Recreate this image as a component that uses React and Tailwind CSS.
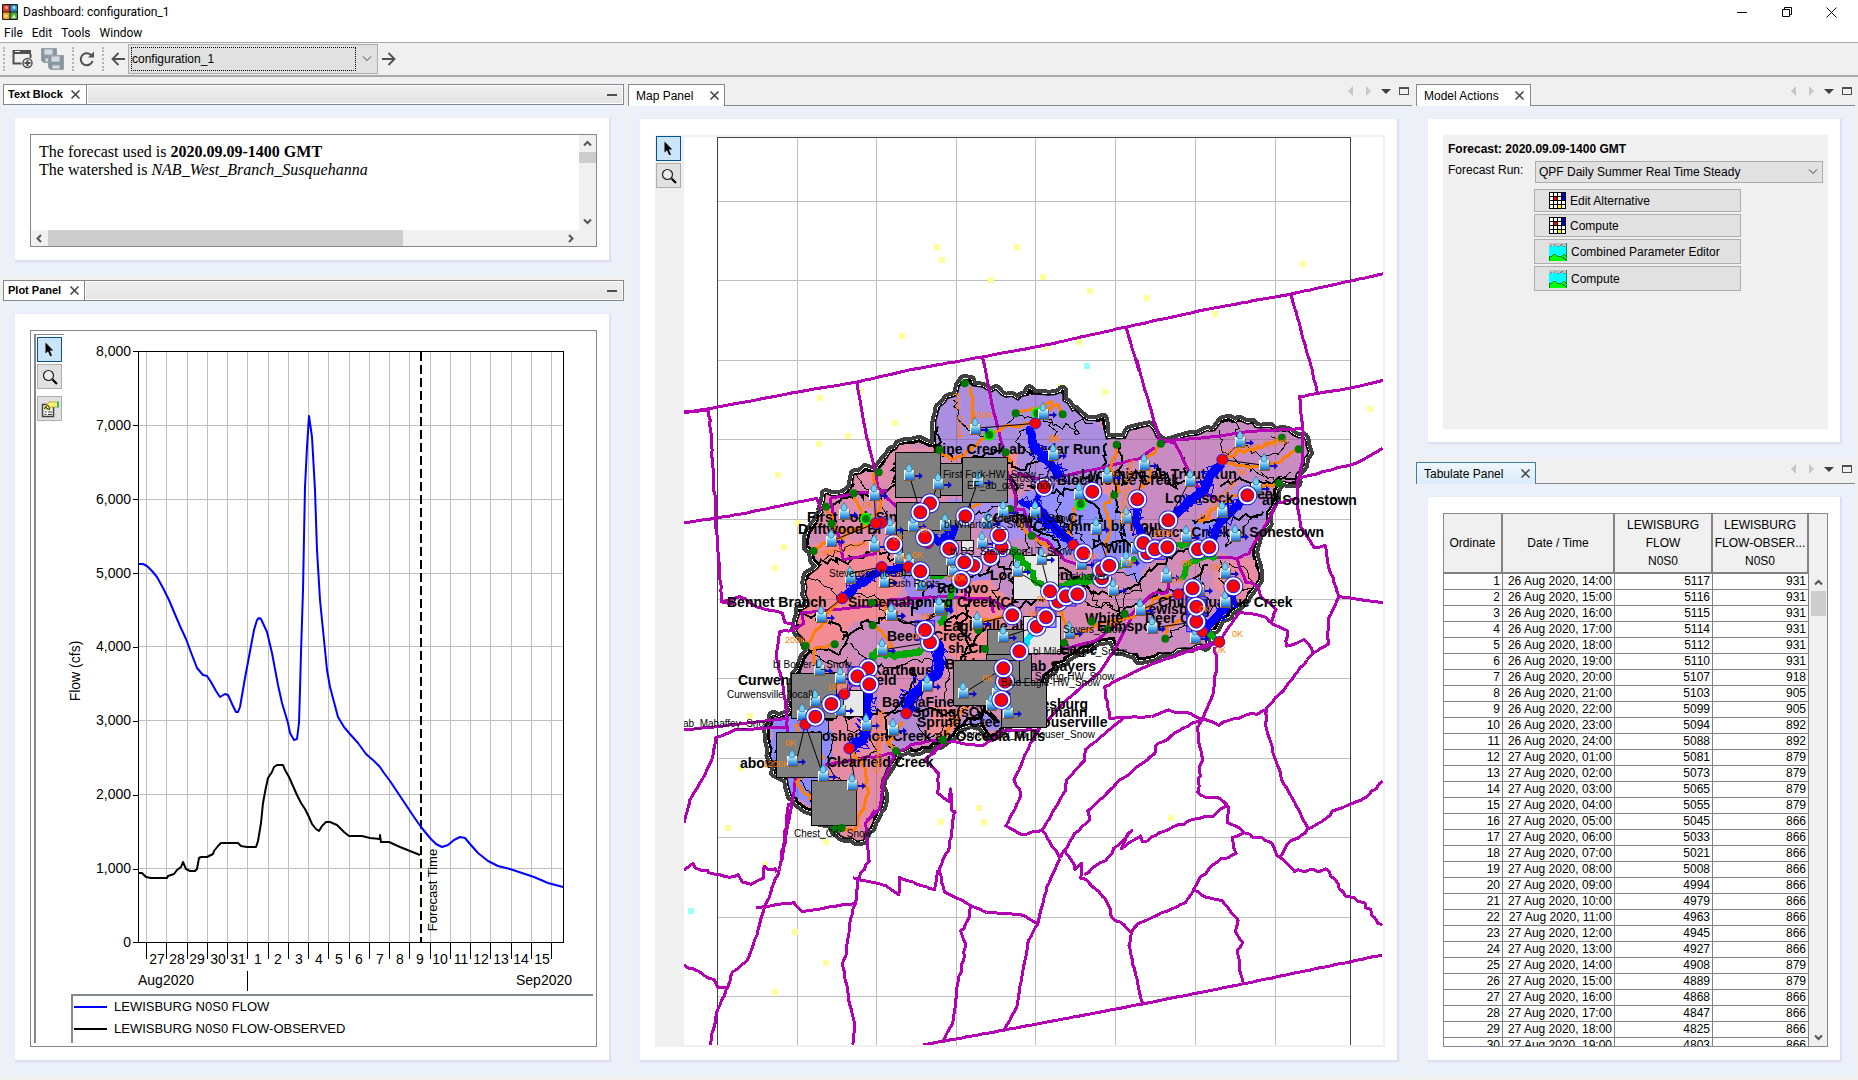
import React from "react";

/* ---------- geometry helpers for the map drawing ---------- */

const sheet = (ox, oy, kx = 3, ky = 3) => (text) =>
  text.trim().split(/\s+/).map((pair) => {
    const [x, y] = pair.split(",").map(Number);
    return [ox + x / kx, oy + y / ky];
  });

const page = sheet(0, 0, 1, 1);
const north = sheet(620, 70, 2.0103, 3);
const nw = sheet(740, 360);
const ne = sheet(1040, 360);
const sw = sheet(730, 600);
const mid = sheet(950, 480);
const south = sheet(670, 780, 2.148, 3);

const noise = (seed) => {
  let s = (seed * 9301 + 49297) % 233280;
  return () => {
    s = (s * 9301 + 49297) % 233280;
    return s / 233280 - 0.5;
  };
};

function rough(points, amp, step, closed = false, seed = 7) {
  const rnd = noise(seed + points.length);
  const pts = closed ? [...points, points[0]] : points;
  const out = [pts[0]];
  for (let i = 1; i < pts.length; i++) {
    const [x0, y0] = pts[i - 1];
    const [x1, y1] = pts[i];
    const n = Math.max(1, Math.round(Math.hypot(x1 - x0, y1 - y0) / step));
    for (let j = 1; j <= n; j++) {
      const t = j / n;
      out.push([x0 + (x1 - x0) * t + rnd() * amp, y0 + (y1 - y0) * t + rnd() * amp]);
    }
  }
  return "M" + out.map(([x, y]) => x.toFixed(1) + " " + y.toFixed(1)).join("L") + (closed ? "Z" : "");
}

const counties = [
  [0.5, page("684,413 740,403 797,392 857,382 909,370 982,357 1046,345 1126,327 1209,309 1291,294 1383,274")],
  [0.5, nw("350,65 365,150 380,230 405,330 415,390 470,440")],
  [0.5, nw("724,-10 730,0 755,130 785,250 800,330 825,400 830,470")],
  [0.5, [...north("1017,772 1043,900"), ...ne("290,0 315,90 360,240 405,250 450,340 480,390 550,430")]],
  [1, [...north("1349,673 1391,900"), ...ne("832,100 780,110 788,205 790,300 775,355 770,415 782,500 825,565 855,555 868,625 898,710 865,775 865,850 820,880 800,900")]],
  [0.5, ne("832,100 930,85 1028,62")],
  [0.5, ne("375,243 530,230 620,215 788,205")],
  [1, ne("775,355 950,310 1028,265")],
  [1, ne("770,415 710,430 680,490 625,580 590,595 500,590")],
  [0.5, ne("898,710 1028,728")],
  [2, ne("590,595 620,665 655,680 665,710 710,750 690,790 740,810 740,860 795,840 820,880")],
  [0.5, [[684, 523], ...nw("0,463 230,415 245,450")]],
  [0.5, nw("270,415 310,600 410,580")],
  [0.5, nw("270,415 345,400 440,390")],
  [0.5, nw("830,340 930,365")],
  [0.5, ne("60,350 200,320 300,295 345,262")],
  [1.5, page("684,411 698,411 709,410 713,470 717,540 722,602 734,604")],
  [1.5, [[722, 602], [740, 597], ...sw("80,20 110,30 155,40 165,65 190,75 190,90 150,95 138,160 150,220 160,270 170,350 175,400 195,540 185,620 155,780")]],
  [1, sw("190,90 220,70 215,40 300,30 400,20 550,10")],
  [1, nw("440,780 450,720 600,710 680,715 750,715 760,760")],
  [1, [[684, 730], ...sw("0,375 175,355")]],
  [0.5, page("684,823 690,800 703,778 712,760 716,738 735,730 788,727")],
  [1.5, south("255,70 240,230 235,270 205,380 180,490 165,545 135,575 125,620 100,700 85,795")],
  [4, south("30,270 50,255 95,285 150,290 170,315 200,290 205,260 230,275")],
  [2, south("30,555 95,600 105,625 125,620")],
  [1, south("185,383 265,368 285,395 395,370")],
  [2, sw("285,495 400,475 490,460 490,470 460,540 450,630 410,660")],
  [1.5, south("440,90 420,130 427,245 405,290 400,360 385,430 380,520 370,545 385,660 398,750 393,795")],
  [1, south("393,293 465,318 492,345 492,292 568,330 575,270")],
  [2, sw("490,460 560,430 640,420 760,440 820,390 930,390")],
  [1.5, [...sw("585,480 640,430"), ...sw("585,480 625,520 625,580 655,605 660,565 665,630 680,640")]],
  [1.5, south("612,90 600,200 578,265 590,335 645,375 680,397 755,403 790,432")],
  [2, south("645,375 645,410 625,455 635,500 620,600 605,730 585,788")],
  [1, south("838,235 810,320 790,432 770,480 755,600 745,680 718,750")],
  [0.5, south("543,795 718,750 1015,672 1230,612 1530,525")],
  [1.5, [...mid("270,745 240,790 220,840"), ...south("738,0 755,45 722,138 755,165 800,150 838,235")]],
  [1, [...mid("520,713 405,810 405,840"), ...south("852,0 850,30 800,150")]],
  [2, [...mid("760,715 700,745 615,800 620,815 590,840"), ...south("968,0 898,95 900,120 870,160 848,210 838,235")]],
  [3.5, south("848,210 870,265 885,255 885,290 930,345 950,405 990,460 985,495")],
  [1, south("985,495 1015,672")],
  [2.5, south("890,285 935,240 990,150 970,208 1010,165 1015,185 1120,120 1165,108 1195,80")],
  [3, [...mid("760,715 740,750 755,840"), ...south("1135,0 1138,50 1185,58 1197,80 1200,125 1232,158 1290,185 1305,230 1340,272 1395,272 1408,265 1450,345 1490,368 1530,440")]],
  [1.5, [...page("1307,660 1286,687 1266,709 1266,729"), ...south("1315,0 1372,148")]],
  [2.5, south("1310,230 1330,190 1372,148 1425,95 1485,60 1530,5")],
  [3, south("1232,158 1210,175 1215,218 1160,255 1125,330")],
  [1, south("1125,330 1108,368 1005,430 990,460")],
  [2, south("1125,330 1160,355 1185,360 1220,420 1215,455 1232,490 1218,515 1230,612")],
  [1.5, mid("810,485 650,535 590,560 462,620 480,715 520,713 605,710")],
  [4, [...mid("605,710 640,690 720,700 760,715 810,735"), [1266, 709]]],
  [2, mid("760,715 790,640 800,560 795,500")],
  [1, mid("550,400 500,500 450,575 350,660 270,745")],
  [1.5, mid("45,300 45,360 120,355 185,400")],
  [2, mid("180,80 220,90 240,160 290,180 340,240 400,265")],
  [1.5, mid("330,510 440,480 545,400 610,340 650,340 660,280")],
  [1.5, ne("410,885 540,840 600,755 680,770 690,790")],
];

const outline = [
  ...nw("672,60 700,72 720,90 770,95 830,120 870,95 960,105"),
  ...ne("65,100 90,150 150,185 190,180 200,240 235,245 270,220 325,198 345,228 375,250 430,232 530,208 545,188 600,182 650,202 720,215 800,240 803,280 780,325 765,362 720,372 700,410 680,465 680,490 645,540 640,580 652,620 655,660 630,690 590,740 560,770 520,800 500,830 500,855 430,858 380,880 300,890 240,870 215,830"),
  ...mid("440,480 350,530 280,590 240,650 170,740 130,770 100,745"),
  ...sw("760,370 700,375 645,425 600,440 500,450 485,490 450,540 460,600 440,650 410,690 405,718 350,718 320,690 250,640 200,608 180,580 170,540 140,520 120,460 118,390 130,352 185,345 190,230 220,180 240,150 222,110 200,80 215,30"),
  ...nw("185,770 205,720 195,660 240,610 205,560 215,520 245,460 260,405 310,402 345,380 345,340 380,335 415,340 430,300 470,270 500,248 540,242 590,270 585,190 612,130 650,110"),
];

const basins = [
  ["#ab8ee0", nw("672,60 600,130 580,200 600,290 700,280 830,330 900,400 1020,420 1120,350 1110,240 1040,150 960,100 830,110")],
  ["#e08cac", nw("590,270 470,250 420,330 340,340 340,400 250,400 230,480 240,520 470,600 600,600 620,400")],
  ["#f38c94", nw("200,560 330,540 470,580 520,620 470,700 440,790 160,790 190,680 240,610")],
  ["#d78cb0", nw("330,380 420,360 480,420 460,520 380,520")],
  ["#f38c94", nw("780,300 830,270 830,340 800,350")],
  ["#a890f0", nw("620,420 830,420 900,560 760,540 700,480 640,470")],
  ["#a088ee", nw("470,610 640,620 760,640 740,700 600,790 520,760")],
  ["#9490ff", ne("60,380 170,380 220,420 260,500 340,590 290,665 200,600 60,580 -60,500 -50,400")],
  ["#e88ca4", ne("180,360 260,380 230,410 190,400")],
  ["#c98cc2", ne("205,240 330,190 540,190 600,180 810,240 800,300 760,360 540,380 440,520 300,530 230,400")],
  ["#b08cdc", ne("545,380 640,360 690,420 680,470 640,540 625,590 530,580 520,480")],
  ["#9490ff", ne("460,480 530,490 530,560 470,560")],
  ["#ea8ca2", ne("540,600 640,600 660,650 640,690 590,740 530,690 515,670")],
  ["#cc8cc0", ne("220,760 340,700 500,640 530,760 500,860 380,885 240,870")],
  ["#d88cb2", ne("0,640 200,690 240,760 60,840 -60,860 -60,680")],
  ["#c48cc6", mid("100,180 250,170 330,240 320,360 180,380 120,280")],
  ["#f38c94", mid("40,300 120,300 200,380 110,540 20,540 -60,460 0,400")],
  ["#cc8cc0", sw("360,60 590,60 600,140 520,180 400,210 340,130")],
  ["#f38c94", sw("220,30 380,40 340,120 230,150 200,90")],
  ["#e58ca4", sw("290,360 410,340 480,340 460,540 410,720 330,720 240,620 300,480")],
  ["#b48cd4", sw("480,330 560,300 620,340 560,430 490,455 465,440")],
  ["#d88cb4", sw("430,200 600,190 660,180 660,300 560,290 470,330")],
  ["#8c8cff", sw("130,350 300,350 310,470 270,560 240,620 180,590 120,480")],
  ["#f38c94", sw("600,320 720,320 640,425 590,390")],
  ["#9c8cf4", sw("700,370 760,320 820,380 780,390 750,370")],
];

const divides = [
  [2, nw("590,200 600,280 680,300 780,280 830,330 900,300 960,280")],
  [1, nw("640,120 660,180 700,230 760,230 830,160 880,180 930,180 950,230")],
  [1, nw("860,200 830,240 880,300 860,340 900,370")],
  [2, nw("470,300 460,380 400,420 350,400 300,430 260,440")],
  [1, nw("345,340 380,390 420,400 440,470 390,540 320,560 250,600")],
  [2, nw("240,610 330,600 420,570 470,600 520,620 560,680 520,760")],
  [1, nw("200,650 260,680 300,720 360,700 420,720 430,780")],
  [2, nw("810,350 840,400 830,450 880,500 950,540 960,600")],
  [1, nw("700,470 760,440 830,470 870,560 800,620 760,700 800,760")],
  [2, nw("600,700 650,650 740,640 760,560")],
  [1, ne("20,180 60,200 90,190 110,230 110,180 150,190")],
  [2, ne("200,250 190,330 230,370 220,430 260,470 250,540 330,590")],
  [2, ne("240,250 240,380 290,330 330,370 360,330 400,380 450,350 430,300")],
  [1, ne("540,210 540,270 580,300 640,330 700,360 760,340")],
  [1, ne("590,190 600,250 660,290 720,280 740,250 700,230")],
  [2, ne("540,380 590,360 660,375 700,365 760,350")],
  [2, ne("460,480 540,480 600,470 680,465")],
  [1, ne("560,440 560,560 620,500 640,470")],
  [2, ne("0,610 70,620 160,700 250,700 320,640 410,580 500,560")],
  [1, ne("150,680 170,740 200,730 230,760 270,700 300,690 290,650 230,640")],
  [2, ne("230,770 340,700 440,690 500,610")],
  [1, ne("480,610 490,700 520,740 480,780 440,800 380,830")],
  [1, ne("540,600 540,660 600,690 640,690 620,630 560,610")],
  [2, ne("-40,380 60,400 120,380 180,470 160,560 250,540")],
  [1, ne("60,400 50,480 100,520 60,590 0,540")],
  [2, mid("100,180 130,230 190,280 190,380 270,360 340,310 400,290")],
  [1, mid("200,130 260,180 300,120 370,130 400,190")],
  [1, mid("410,320 390,350 440,390 470,370 500,390 500,320")],
  [2, mid("50,310 60,400 20,440 60,500 20,560")],
  [2, sw("220,40 300,60 350,110 330,160 230,150")],
  [2, sw("340,120 420,60 560,65 600,60 640,0")],
  [1, sw("360,130 420,190 500,200 560,180 640,180 660,220 640,290")],
  [1, sw("240,150 290,190 350,180 380,210")],
  [2, sw("480,340 520,290 560,240 540,200")],
  [2, sw("190,350 300,350 400,345 470,330 480,450")],
  [1, sw("290,360 310,420 290,500 330,540 350,600")],
  [1, sw("350,340 360,390 400,400 440,460 400,480 360,450")],
  [2, sw("480,335 560,320 620,340 680,340 720,320")],
  [1, sw("560,370 600,420 640,390 690,360")],
  [2, sw("640,60 700,40 760,60 740,130 700,180")],
  [3, sw("690,380 720,355 740,365 770,330 800,360")],
  [1, sw("170,400 140,450 180,520 220,540 240,600")],
];

const greenReach = [
  [6, mid("180,200 230,260 280,320")],
  [7, sw("410,190 440,160 500,165 575,150")],
  [6, nw("655,660 625,720 600,790")],
  [5, nw("570,650 650,640")],
  [5, nw("540,590 560,570")],
  [6, ne("430,660 440,610 480,590 530,590")],
  [5, ne("380,550 470,560")],
  [6, ne("120,670 150,650 230,620 290,590")],
  [4, ne("120,430 115,450")],
  [6, mid("300,330 360,310 430,300 460,260")],
  [6, ne("500,820 540,845")],
];

const blueReach = [
  [9, nw("872,200 880,260 930,310 960,350")],
  [9, ne("0,285 20,300 60,345")],
  [6, nw("910,380 885,430 950,500 1000,550")],
  [10, ne("545,310 510,345 495,390 440,430 400,465")],
  [9, ne("620,410 575,450 535,500 515,545")],
  [8, ne("295,430 285,480 310,540")],
  [7, ne("-60,420 0,465 100,555")],
  [9, ne("580,690 575,720 530,770 490,815")],
  [9, nw("310,715 360,670 420,630 500,625")],
  [9, nw("632,500 632,530 580,545 560,470")],
  [10, sw("360,445 400,412 412,370 412,260")],
  [11, sw("530,340 545,290 590,250 628,215 628,135 605,125")],
  [6, mid("250,90 300,140 370,195")],
  [6, mid("300,430 250,460 210,510 165,560 165,610")],
  [6, sw("226,373 256,350 304,312 343,282 380,230")],
  [6, ne("470,680 470,800")],
  [6, mid("20,120 -10,200")],
];

const orangeReach = [
  nw("690,80 700,110 693,200"),
  nw("750,222 800,200 880,190"),
  nw("750,222 690,270 640,300 600,280"),
  nw("830,160 880,150 930,145 960,130"),
  nw("400,340 410,400 425,440 400,490"),
  nw("340,400 360,450 385,485"),
  nw("260,440 290,510 380,500"),
  nw("220,570 280,540 330,520 400,495"),
  nw("310,715 240,770"),
  nw("395,730 430,730 440,755"),
  nw("720,430 690,450"),
  nw("800,280 815,310"),
  ne("0,140 30,130 65,150"),
  ne("230,250 215,330 240,400 195,430 210,500 195,580"),
  ne("100,440 100,490 85,510 95,550"),
  ne("360,250 320,300 330,350 290,400"),
  ne("545,300 600,275 640,270 725,235"),
  ne("560,310 640,320 720,300 775,270"),
  ne("640,400 680,375 715,370"),
  ne("590,405 540,440 480,490"),
  ne("250,770 180,790 70,840"),
  ne("200,800 300,760 340,720 410,705"),
  ne("375,830 385,800 430,780"),
  mid("180,90 245,170 300,200"),
  mid("350,440 330,390"),
  sw("360,450 410,520 410,600 370,690 320,690"),
  sw("226,373 200,380 280,470 200,540 240,600"),
  sw("490,450 475,430 520,360"),
  sw("640,420 680,350 710,320"),
  sw("430,80 480,120 480,150"),
  sw("230,140 260,90 290,60"),
  sw("315,130 250,150 260,200"),
  sw("760,60 840,50"),
];

const grayBoxes = [
  nw("470,428 692,541"), nw("487,510 622,645"), nw("600,310 668,406"), nw("467,277 602,412"), nw("667,293 802,428"),
  sw("184,220 318,355"), sw("139,397 275,532"), sw("244,541 380,676"), sw("772,87 880,163"), sw("770,163 904,300"),
  sw("671,181 868,316"), sw("815,247 950,382"),
];
const paleBoxes = [nw("665,541 700,572"), nw("820,585 955,717"), sw("880,50 990,160"), sw("340,270 400,350")];
const blueBoxes = [ne("440,710 498,768"), sw("354,200 412,258"), sw("556,62 614,120"), sw("918,22 978,82"), ne("50,680 108,738"), ne("315,540 375,598"), ne("440,755 495,815"), ne("160,600 210,660")];

const dots = [
  ...nw("674,70 827,160 797,277 598,270 416,337 341,400 258,440 275,491 221,573 395,728 810,447 875,527"),
  ...ne("68,163 230,254 362,251 223,405 726,233 776,268 716,370 254,761 155,785 202,808 72,849 376,836"),
  ...sw("227,137 314,133 428,76 498,453 638,420 765,147 745,90 335,684 315,688"),
];
const limeDots = [...nw("748,224 378,476 892,160"), ...ne("122,432")];

const ringed = [
  ...nw("570,430 541,457 676,469 912,381 785,562 778,526 628,566 555,532 700,617 673,607 541,634 663,660 460,553 751,590"),
  ...ne("157,395 292,418 385,481 622,406 322,580 310,549 345,568 382,562 474,568 508,562 130,580 186,655 186,630 208,617 458,685 580,679 469,785 469,740 55,725 30,694 78,709 112,703"),
  ...sw("415,205 382,229 418,253 304,312 256,350 600,127 585,90 847,46 868,154 825,245 820,205 814,300 920,80 948,52"),
];
const plainNodes = [
  ...nw("886,190 425,488 407,490 425,621 307,715 564,549 505,621"),
  ...ne("547,299 100,555 415,703 487,815 538,846"),
  ...sw("343,282 226,373 358,445 529,340"),
];

const gauges = [
  ...nw("508,346 595,373 714,365 705,207 910,163 940,285 403,405 313,462 274,543 451,507 403,558 520,498 616,495 330,654 242,770 476,593 788,456 741,490 884,456 726,549 640,633 432,666 543,675 600,750 830,633 904,598 456,765 508,612 634,600"),
  ...ne("200,352 313,315 117,402 257,475 169,508 449,363 601,247 673,316 649,385 545,456 586,528 439,532 257,605 379,650 220,690 124,612 301,750 337,804 87,820 556,640 556,725 465,835 287,565 477,690"),
  ...sw("484,46 457,150 268,210 331,234 256,304 217,344 331,330 409,376 490,390 592,258 187,484 280,528 367,556 742,70 820,112 700,280 784,315 835,340 628,25 801,280"),
];

const links = [
  nw("508,346 541,457"), nw("595,373 570,430"), nw("714,365 676,469"), nw("705,205 886,190"), nw("940,285 912,381"),
  nw("330,640 425,621"), nw("242,765 307,715"), nw("904,598 928,693"), nw("313,462 407,490"), nw("274,543 407,490"),
  nw("403,405 407,490"), nw("830,633 928,693"), ne("449,363 385,481"), ne("673,316 547,299"), ne("601,247 547,299"), ne("313,315 292,418"),
  ne("169,508 208,617"), ne("337,804 469,785"), ne("301,750 415,703"), ne("0,460 100,555"), sw("226,373 200,480"),
  sw("226,373 280,528"), sw("358,445 375,545"), sw("700,280 820,205"), sw("742,70 847,46"), sw("484,46 585,90"),
  sw("457,150 600,127"), sw("820,112 920,80"), sw("268,210 382,229"), sw("592,258 529,340"), sw("835,340 814,300"),
];

const yellow = [
  ...north("637,531 647,570 745,630 799,531 851,621 945,663 1059,684 1373,582 1197,733 923,817 857,832 567,798"),
  ...south("125,145 335,186 203,256 582,126 674,126 663,84 1076,114 268,456 335,548 225,636"),
  ...nw("240,114 359,93 464,189 324,228 237,252 114,345 174,489 132,561 105,624"),
  ...ne("62,82 194,96 990,147"),
  ...sw("60,348 32,504"),
];
const cyan = [...north("939,888"), ...south("45,393")];

const at = (s, x, y, t) => [s(`${x},${y}`)[0], t];
const boldLabels = [
  at(nw, 578, 283, "Pine Creek ab Cedar Run"),
  at(nw, 200, 485, "First Fork Sinn"),
  at(nw, 175, 522, "Driftwood Br"),
  at(nw, -38, 742, "Bennet Branch"),
  at(nw, 325, 742, "Sinnemahoning Creek(CF"),
  at(nw, 590, 700, "Renovo"),
  at(nw, 760, 488, "Cedar Run Cr"),
  at(ne, 122, 358, "Lycoming ab Trout Run"),
  at(ne, 50, 374, "Blockhouse Creek"),
  at(ne, 375, 430, "Loyalsock"),
  at(ne, 650, 418, "eek"),
  at(ne, 667, 436, "ab Sonestown"),
  at(ne, -20, 514, "Cr Cammal bl Trout"),
  at(ne, 310, 530, "Muncy Creek"),
  at(ne, 580, 530, "bl Sonestown"),
  at(ne, 195, 578, "Williams"),
  at(ne, 355, 742, "Chillisquaque Creek"),
  at(ne, 300, 762, "Lewisburg"),
  at(ne, 135, 788, "White"),
  at(ne, 315, 790, "Deer Cr"),
  at(ne, 170, 812, "Elimsport"),
  at(mid, 120, 300, "Lock Haven"),
  at(mid, 330, 522, "Eagle"),
  at(mid, 240, 572, "ab Sayers"),
  at(mid, 215, 686, "Milesburg"),
  at(mid, 260, 710, "ermann"),
  at(mid, 245, 742, "Houserville"),
  at(sw, 240, 422, "Moshannon Creek ab Osceola Mills"),
  at(sw, 560, 382, "Spring_Creek"),
  at(sw, 455, 322, "BaEFaFinefield"),
  at(sw, 545, 350, "Spring(sC)"),
  at(sw, 23, 254, "Curwensville"),
  at(sw, 30, 503, "above"),
  at(sw, 290, 500, "Clearfield Creek"),
  at(sw, 470, 122, "Beech Creek"),
  at(sw, 640, 92, "Eagleville abv"),
  at(sw, 655, 160, "sh Cr"),
  at(sw, 425, 225, "Karthaus"),
  at(sw, 400, 254, "ffield"),
  at(sw, 645, 208, "Bald"),
];
const smallLabels = [
  at(nw, 608, 355, "First Fork-HW_Snow"),
  at(nw, 680, 388, "EF_ab_gage_Snow"),
  at(nw, 808, 367, "Cross Fork-L_Snow"),
  at(nw, 611, 504, "bl Wharton-L_Snow"),
  at(nw, 735, 485, "Cedar Run-L_Snow"),
  at(nw, 629, 585, "bl DS_Stevenson-LT_Snow"),
  at(nw, 266, 652, "Stevenson (local)"),
  at(nw, 444, 682, "Bush Roots"),
  at(ne, 60, 660, "Lockhaven"),
  at(mid, 340, 460, "Sayers_Snow"),
  at(mid, 250, 525, "bl Milesburg-L_Snow"),
  at(mid, 255, 601, "Spring-HW_Snow"),
  at(mid, 152, 619, "Bald Eagle-HW_Snow"),
  at(mid, 30, 775, "Spring_Crk_ab_Houser_Snow"),
  at(sw, 128, 204, "bl Bower-L_Snow"),
  at(sw, -8, 295, "Curwensville (local)"),
  at(sw, -140, 382, "ab_Mahaffey_Snow"),
  at(sw, 193, 710, "Chest_Crk_Snow"),
];
const orangeLabels = [
  at(nw, 697, 175, "400K"), at(nw, 930, 243, "0K"), at(nw, 370, 445, "0K"), at(nw, 460, 543, "0K"), at(nw, 540, 520, "0K"),
  at(nw, 470, 603, "0K"), at(nw, 515, 595, "0K"), at(nw, 618, 663, "600K"), at(nw, 890, 725, "0K"),
  at(ne, 28, 245, "0K"), at(ne, 590, 345, "0K"), at(ne, 340, 527, "200K"), at(ne, 145, 596, "0K"), at(ne, 254, 618, "0K"),
  at(ne, 425, 617, "0K"), at(ne, 398, 670, "0K"), at(ne, 514, 631, "0K"), at(ne, 478, 755, "0K"), at(ne, 575, 832, "0K"),
  at(ne, 526, 878, "0K"), at(sw, 165, 128, "200K"), at(sw, 290, 271, "1000K"), at(sw, 166, 437, "0K"), at(sw, 100, 502, "1200K"),
  at(sw, 755, 243, "0K"), at(sw, 575, 58, "0K"), at(sw, 545, 118, "0K"), at(sw, 898, 50, "0K"),
];
const turnedLabels = [
  [...at(nw, 650, 165, "Creek"), 90], [...at(nw, 640, 100, "Pine"), 80], [...at(nw, 248, 590, "West Creek"), -14],
  [...at(ne, 250, 490, "Lycoming Creek"), -80], [...at(ne, 550, 285, "Loyalsock Creek"), -10],
  [...at(ne, 485, 490, "Muncy Creek"), -48], [...at(sw, 450, 520, "Clearfield Creek"), -86],
];

function Gauge({ x, y }) {
  return (
    <g transform={`translate(${Math.round(x)} ${Math.round(y)})`}>
      <path d="M-5 5.500h10.500v-10" fill="none" stroke="#8a5a28" strokeWidth="1" />
      <rect x="-5" y="-5" width="10" height="10" fill="#fff3d8" />
      <rect x="-4" y="-4" width="9" height="9" fill="url(#water)" />
      <path d="M0 -12C-1 -9 -3 -8 -3 -6a3 3 0 0 0 6 0C3 -8 1 -9 0 -12Z" fill="#6fd0f4" stroke="#1f6f9f" strokeWidth=".7" />
      <path d="M6 0h4v-2.500l4 3.500-4 3.500v-2.500h-4z" fill="#0a0ac8" />
    </g>
  );
}

function RiverMap() {
  const ring = rough(outline, 5, 6, true);
  const f = "Liberation Sans, Arial, sans-serif";
  return (
    <svg viewBox="684 137 699 908" className="block size-full bg-white" role="img" aria-label="West Branch Susquehanna watershed map">
      <defs>
        <clipPath id="shed"><path d={ring} /></clipPath>
        <linearGradient id="water" x1="0" y1="0" x2="0" y2="1">
          <stop offset="0" stopColor="#d8f4ff" />
          <stop offset="0.400" stopColor="#62c0f4" />
          <stop offset="1" stopColor="#1c62c8" />
        </linearGradient>
      </defs>
      <g stroke="#c0c0c0" shapeRendering="crispEdges">
        {[797, 876, 956, 1035, 1115, 1195, 1275].map((x) => <path key={x} d={`M${x} 137V1045`} />)}
        {[201, 280, 360, 439, 519, 599, 678, 758, 837, 917, 996].map((y) => <path key={y} d={`M717 ${y}H1350`} />)}
      </g>
      <path d="M717.500 1045V137.500H1350.500V1045" fill="none" stroke="#404040" shapeRendering="crispEdges" />
      {yellow.map(([x, y], i) => <rect key={i} x={Math.round(x) - 3} y={Math.round(y) - 3} width="6" height="6" fill="#ffff99" />)}
      {cyan.map(([x, y], i) => <rect key={i} x={Math.round(x) - 3} y={Math.round(y) - 3} width="6" height="6" fill="#99ffff" />)}

      <g fill="none" shapeRendering="crispEdges" strokeLinejoin="round">
        <path d={ring} stroke="#404040" strokeWidth="12" />
        <path d={ring} stroke="#ffffff" strokeWidth="4" />
        <path d={ring} fill="#d18cb8" stroke="#000000" strokeWidth="3" />
      </g>
      <g clipPath="url(#shed)" shapeRendering="crispEdges">
        {basins.map(([c, p], i) => <path key={i} d={rough(p, 5, 6, true, i)} fill={c} />)}
        <g stroke="#000000" strokeOpacity="0.150">
          {[797, 876, 956, 1035, 1115, 1195, 1275].map((x) => <path key={x} d={`M${x} 137V1045`} />)}
          {[439, 519, 599, 678, 758, 837].map((y) => <path key={y} d={`M717 ${y}H1350`} />)}
        </g>
        {divides.map(([w, p], i) => <path key={i} d={rough(p, w > 1 ? 7 : 6, 4, false, i * 3)} fill="none" stroke="#000000" strokeWidth={w} />)}
      </g>
      <g fill="none" shapeRendering="crispEdges" strokeLinejoin="round">
        {counties.map(([a, p], i) => <path key={i} d={rough(p, a, 5, false, i)} stroke="#b400b4" strokeWidth="3" />)}
        {orangeReach.map((p, i) => <path key={i} d={rough(p, 4, 5, false, i)} stroke="#ff8000" strokeWidth="3" />)}
        {greenReach.map(([w, p], i) => <path key={i} d={rough(p, 4, 3, false, i)} stroke="#00aa00" strokeWidth={w} />)}
      </g>

      <g fontFamily={f} fontSize="14" fontWeight="700" fill="#000000">
        {boldLabels.map(([[x, y], t], i) => <text key={i} x={Math.round(x)} y={Math.round(y)}>{t}</text>)}
      </g>
      <g fill="none" shapeRendering="crispEdges" strokeLinejoin="round">
        {blueReach.map(([w, p], i) => <path key={i} d={rough(p, 3, 4, false, i)} stroke="#0000ff" strokeWidth={w - 1} />)}
        {blueReach.map(([w, p], i) => <path key={i} d={rough(p, w * 2, 2, false, i + 5)} stroke="#0000ff" strokeWidth="1" />)}
      </g>
      <g stroke="#000000" shapeRendering="crispEdges">
        {paleBoxes.map(([[x, y], [u, v]], i) => <rect key={i} x={x} y={y} width={u - x} height={v - y} fill="#e8e8e8" />)}
        {grayBoxes.map(([[x, y], [u, v]], i) => <rect key={i} x={x} y={y} width={u - x} height={v - y} fill="#808080" />)}
      </g>
      <path d={rough(mid("180,200 230,260 275,320"), 4, 3)} fill="none" stroke="#00aa00" strokeWidth="6" shapeRendering="crispEdges" />
      <path d={rough(mid("262,445 215,500"), 4, 3)} fill="none" stroke="#00e0ff" strokeWidth="6" shapeRendering="crispEdges" />
      <path d={rough(nw("632,500 625,535 580,548"), 12, 3)} fill="none" stroke="#0000ff" strokeWidth="7" shapeRendering="crispEdges" />
      {links.map(([[x, y], [u, v]], i) => <path key={i} d={`M${x} ${y}L${u} ${v}`} stroke="#000000" strokeWidth="1" />)}
      {blueBoxes.map(([[x, y], [u, v]], i) => <rect key={i} x={x} y={y} width={u - x} height={v - y} fill="#4040ff" fillOpacity="0.350" stroke="#2020ff" />)}
      {limeDots.map(([x, y], i) => <circle key={i} cx={x} cy={y} r="5" fill="#008000" stroke="#00ff00" strokeWidth="2" />)}
      {dots.map(([x, y], i) => <circle key={i} cx={x} cy={y} r="4" fill="#007800" />)}
      {gauges.map(([x, y], i) => <Gauge key={i} x={x} y={y} />)}
      <g fontFamily={f} fontSize="9" fill="#ff8000">
        {turnedLabels.map(([[x, y], t, r], i) => <text key={i} transform={`translate(${x} ${y}) rotate(${r})`}>{t}</text>)}
      </g>
      {plainNodes.map(([x, y], i) => <circle key={i} cx={x} cy={y} r="5.500" fill="#ff0000" stroke="#2020ff" />)}
      {ringed.map(([x, y], i) => (
        <g key={i}>
          <circle cx={x} cy={y} r="9" fill="#2020ff" stroke="#2a20c8" strokeWidth="2" />
          <circle cx={x} cy={y} r="8" fill="#2020ff" stroke="#ffffff" strokeWidth="2" />
          <circle cx={x} cy={y} r="6" fill="#ff0000" />
        </g>
      ))}
      <g fontFamily={f} fontSize="10" fill="#000000">
        {smallLabels.map(([[x, y], t], i) => <text key={i} x={Math.round(x)} y={Math.round(y)}>{t}</text>)}
      </g>
      <g fontFamily={f} fontSize="9" fill="#ff8000">
        {orangeLabels.map(([[x, y], t], i) => <text key={i} x={Math.round(x)} y={Math.round(y)}>{t}</text>)}
      </g>
    </svg>
  );
}

/* ---------- hydrograph ---------- */

const flow =
  "139,564 143,564 147,566 152,571 157,577 163,588 169,600 174,612 180,626 186,639 192,655 197,668 203,675 207,676 211,682 216,691 220,697 225,694 228,695 233,706 236,712 238,712 240,707 245,678 248,662 251,646 254,630 257,620 259,618 261,619 267,632 272,653 278,685 282,703 285,713 288,723 290,733 294,740 297,739 299,723 300,690 301,653 303,590 304,537 305,487 307,447 309,416 312,437 315,490 317,550 320,600 324,640 327,670 330,687 334,702 338,717 344,727 349,733 358,743 366,754 374,761 380,767 384,773 390,781 398,793 406,805 414,817 421,827 430,838 436,844 442,847 448,845 454,840 460,837 465,838 470,844 478,853 488,861 498,866 510,869 522,873 534,877 548,883 563,887";
const observed =
  "139,873 142,873 146,877 151,878 159,878 167,878 168,876 174,874 177,870 181,867 183,862 186,869 190,871 195,871 197,869 199,858 201,857 207,857 213,854 214,851 218,846 221,843 234,843 238,843 241,846 247,847 256,847 258,841 261,823 263,803 266,787 268,778 272,772 274,767 277,765 283,765 285,770 289,777 293,786 297,795 301,803 305,809 309,817 312,824 316,829 319,831 322,826 326,822 330,822 337,825 344,832 349,836 362,836 370,838 380,839 380,835 381,842 389,842 400,847 410,851 420,855";
const days = ["27", "28", "29", "30", "31", "1", "2", "3", "4", "5", "6", "7", "8", "9", "10", "11", "12", "13", "14", "15"];

function Hydrograph() {
  const xs = Array.from({ length: 21 }, (_, i) => Math.round(146.2 + 20.25 * i));
  return (
    <svg viewBox="66 334 527 660" className="block size-full" fontFamily="Liberation Sans, Arial, sans-serif" fontSize="14" role="img" aria-label="Flow hydrograph">
      <g stroke="#c0c0c0" shapeRendering="crispEdges">
        {xs.map((x) => <path key={x} d={`M${x} 352V942`} />)}
        {[1, 2, 3, 4, 5, 6, 7].map((n) => <path key={n} d={`M139 ${Math.round(942 - n * 73.9)}H563`} />)}
      </g>
      <g stroke="#000000" shapeRendering="crispEdges" fill="none">
        <rect x="138.500" y="351.500" width="425" height="591" />
        {xs.map((x) => <path key={x} d={`M${x} 942V959`} />)}
        {[0, 1, 2, 3, 4, 5, 6, 7, 8].map((n) => <path key={n} d={`M133 ${Math.round(942.4 - n * 73.9)}H139`} />)}
        <path d="M247 971V991" />
      </g>
      {[0, 1, 2, 3, 4, 5, 6, 7, 8].map((n) => (
        <text key={n} x="131" y={Math.round(947 - n * 73.9)} textAnchor="end">{n === 0 ? "0" : `${n},000`}</text>
      ))}
      {days.map((d, i) => <text key={d} x={Math.round(156.8 + 20.25 * i)} y="964" textAnchor="middle">{d}</text>)}
      <text x="138" y="985">Aug2020</text>
      <text x="516" y="985">Sep2020</text>
      <text transform="translate(80 671) rotate(-90)" textAnchor="middle">Flow (cfs)</text>
      <text transform="translate(437 890) rotate(-90)" textAnchor="middle" fontSize="13">Forecast Time</text>
      <g fill="none" strokeWidth="2" strokeLinejoin="round">
        <path d="M421 352V942" stroke="#000000" strokeDasharray="9 4" shapeRendering="crispEdges" />
        <polyline points={flow} stroke="#0000ff" />
        <polyline points={observed} stroke="#000000" />
      </g>
    </svg>
  );
}

/* ---------- small icons ---------- */

const CloseX = ({ label }) => (
  <button type="button" aria-label={label} className="flex size-3 items-center justify-center">
    <svg width="9" height="9" viewBox="0 0 9 9"><path d="M0.500 0.500l8 8M8.500 0.500l-8 8" stroke="#404040" strokeWidth="1.500" /></svg>
  </button>
);

const Chevron = ({ dir, size = 9 }) => (
  <svg width={size} height={size} viewBox="0 0 9 9" fill="none" stroke="#555555" strokeWidth="2">
    {dir === "up" && <path d="M1 6.500l3.500-3.500 3.500 3.500" />}
    {dir === "down" && <path d="M1 2.500l3.500 3.500 3.500-3.500" />}
    {dir === "left" && <path d="M6 1l-3.500 3.500 3.500 3.500" />}
    {dir === "right" && <path d="M3 1l3.500 3.500-3.500 3.500" />}
  </svg>
);

const ThinChevron = () => (
  <svg width="10" height="6" viewBox="0 0 10 6" fill="none" stroke="#404040" className="pointer-events-none"><path d="M1 0.500l4 4 4-4" /></svg>
);

function PointerTools() {
  return (
    <>
      <button type="button" aria-label="Select" className="flex h-[25px] w-[25px] items-center justify-center border border-[#005499] bg-[#cce4f7]">
        <svg width="9" height="15" viewBox="0 0 9 15"><path d="M0.500 0.500v11l2.500-2.200 2.200 5 1.800-0.800-2.200-4.900h3.500z" fill="#000000" /></svg>
      </button>
      <button type="button" aria-label="Zoom" className="mt-0.5 flex h-[25px] w-[25px] items-center justify-center border border-[#adadad] bg-[#e1e1e1]">
        <svg width="16" height="16" viewBox="0 0 16 16"><circle cx="6.500" cy="6.500" r="5" fill="#ececec" stroke="#202020" strokeWidth="1.200" /><path d="M10.500 10.500l4.500 4.500" stroke="#000000" strokeWidth="2.200" /></svg>
      </button>
    </>
  );
}

const GridIcon = () => (
  <svg width="17" height="17" viewBox="0 0 17 17" shapeRendering="crispEdges">
    <rect width="17" height="17" fill="#000000" />
    {[0, 1, 2, 3].map((r) => [0, 1, 2, 3].map((c) => (
      <rect key={`${r}${c}`} x={1 + c * 4} y={1 + r * 4} width="3" height="3"
        fill={c === 3 && r < 2 ? "#0000e0" : c === 1 && r === 1 ? "#ff0000" : c === 2 && r === 3 ? "#ffff00" : "#ffffff"} />
    )))}
  </svg>
);

const RainIcon = () => (
  <svg width="18" height="18" viewBox="0 0 18 18" shapeRendering="crispEdges">
    <rect width="18" height="18" fill="#00ffff" />
    <rect width="18" height="3" fill="#c0c0c0" />
    <path d="M1 4l2-2M5 3l2-2M8 4l2-1M11 3l3-2M14 4l2-1" stroke="#708090" />
    <path d="M0 18v-4l3-1 2-2 2 1 2 2 4-1 2-2 3 3v4z" fill="#00ff00" stroke="#108020" />
    <path d="M17.500 0v18M12 13l5 4" stroke="#108060" />
  </svg>
);

/* ---------- panels ---------- */

function Card({ children }) {
  return (
    <div className="flex min-h-0 flex-1 bg-[#ecf0f9] pt-[13px] pr-[15px] pb-4 pl-3">
      <div className="flex min-w-0 flex-1 bg-white pt-4 pr-3 pb-[13px] pl-[15px] shadow-[1px_1px_1px_1px_#dedff2]">{children}</div>
    </div>
  );
}

function SlidePanel({ title, className, children }) {
  return (
    <section className={`flex flex-col ${className}`}>
      <header className="flex h-[21px] shrink-0 items-stretch border border-[#828790] bg-white">
        <div className="flex items-center gap-[7px] border-r border-[#828790] px-1 text-[11px] font-bold">
          <h2>{title}</h2>
          <CloseX label={`Close ${title}`} />
        </div>
        <div className="m-px flex flex-1 items-center justify-end bg-linear-to-b from-[#efefef] to-[#e4e4e4] pr-1">
          <button type="button" aria-label={`Minimize ${title}`} className="flex h-4 w-3 items-center justify-center"><span className="h-0.5 w-2.5 bg-[#505050]" /></button>
        </div>
      </header>
      <Card>{children}</Card>
    </section>
  );
}

function TabPanel({ title, active, className, children }) {
  return (
    <section className={`flex flex-col ${className}`}>
      <header className="flex h-[22px] shrink-0 items-stretch">
        <div className={active
          ? "flex items-center gap-4 border border-b-0 border-[#3c7fb1] bg-linear-to-b from-[#f0f7fd] to-[#d9ebf9] pr-1 pl-[7px]"
          : "flex items-center gap-[15px] border border-b-0 border-[#828790] bg-white pr-1 pl-[7px]"}>
          <h2>{title}</h2>
          <CloseX label={`Close ${title}`} />
        </div>
        <div className="flex flex-1 items-start justify-end gap-1.5 border-b border-[#828790] pt-px pr-0.5">
          <button type="button" aria-label="Previous tab" className="flex size-3 items-center justify-center"><svg width="5" height="10" viewBox="0 0 5 10"><path d="M5 0v10l-5-5z" fill="#c6c6c6" /></svg></button>
          <button type="button" aria-label="Next tab" className="flex size-3 items-center justify-center"><svg width="5" height="10" viewBox="0 0 5 10"><path d="M0 0v10l5-5z" fill="#c6c6c6" /></svg></button>
          <button type="button" aria-label="Tab list" className="flex size-3 items-center justify-center"><svg width="10" height="5" viewBox="0 0 10 5"><path d="M0 0h10l-5 5z" fill="#404040" /></svg></button>
          <button type="button" aria-label="Maximize" className="flex size-3 items-center justify-center"><span className="h-2 w-2.5 border border-t-2 border-[#505050]" /></button>
        </div>
      </header>
      <Card>{children}</Card>
    </section>
  );
}

const flows = [5117, 5116, 5115, 5114, 5112, 5110, 5107, 5103, 5099, 5094, 5088, 5081, 5073, 5065, 5055, 5045, 5033, 5021, 5008, 4994, 4979, 4963, 4945, 4927, 4908, 4889, 4868, 4847, 4825, 4803];
const seen = [931, 931, 931, 931, 931, 931, 918, 905, 905, 892, 892, 879, 879, 879, 879, 866, 866, 866, 866, 866, 866, 866, 866, 866, 879, 879, 866, 866, 866, 866];
const rows = flows.map((v, i) => {
  const hour = 14 + i;
  const day = hour > 24 ? 27 : 26;
  const hh = String(hour > 24 ? hour - 24 : hour).padStart(2, "0");
  return [i + 1, `${day} Aug 2020, ${hh}:00`, v, seen[i]];
});

const heads = [["Ordinate"], ["Date / Time"], ["LEWISBURG", "FLOW", "N0S0"], ["LEWISBURG", "FLOW-OBSER...", "N0S0"]];

const actions = [
  ["Edit Alternative", GridIcon, "h-[23px]"],
  ["Compute", GridIcon, "h-[23px]"],
  ["Combined Parameter Editor", RainIcon, "h-[25px]"],
  ["Compute", RainIcon, "h-[25px]"],
];

const Grip = () => <div className="h-6 w-0 border-l-2 border-dotted border-[#b4b4b4]" />;

export default function App() {
  return (
    <div className="flex h-screen flex-col overflow-hidden bg-[#f0f0f0] font-['Liberation_Sans',Arial,sans-serif] text-xs text-black">
      <div className="flex h-[22px] shrink-0 items-center bg-white pt-0.5 pl-0.5 font-[Roboto,'Open_Sans',sans-serif]">
        <svg width="16" height="16" viewBox="0 0 16 16">
          <rect width="16" height="16" rx="1" fill="#202020" />
          <rect x="1" y="1" width="6.500" height="6.500" rx="1" fill="#e03a24" />
          <rect x="8.500" y="1" width="6.500" height="6.500" rx="1" fill="#2b8fd0" />
          <rect x="1" y="8.500" width="6.500" height="6.500" rx="1" fill="#f0a020" />
          <rect x="8.500" y="8.500" width="6.500" height="6.500" rx="1" fill="#4aa83c" />
          <circle cx="4.500" cy="3.500" r="1.500" fill="#ffb0a0" /><circle cx="12" cy="3.500" r="1.500" fill="#b0e0ff" />
          <circle cx="4" cy="12" r="1.500" fill="#fff0a0" /><path d="M9.500 14l2.500-4 2 4z" fill="#c8f0a0" />
        </svg>
        <h1 className="ml-[5px] flex-1">Dashboard: configuration_1</h1>
        <div className="flex pr-1">
          <button type="button" aria-label="Minimize" className="flex w-[45px] justify-center"><svg width="10" height="10"><path d="M0 5.500h10" stroke="#000000" /></svg></button>
          <button type="button" aria-label="Restore" className="flex w-[45px] justify-center"><svg width="10" height="10" fill="none" stroke="#000000"><path d="M0.500 2.500h7v7h-7zM2.500 2.500v-2h7v7h-2" /></svg></button>
          <button type="button" aria-label="Close" className="flex w-[45px] justify-center"><svg width="11" height="11"><path d="M0.500 0.500l10 10M10.500 0.500l-10 10" stroke="#000000" /></svg></button>
        </div>
      </div>
      <nav className="flex h-5 shrink-0 items-center gap-[9px] bg-white pt-0.5 pl-1 font-[Roboto,'Open_Sans',sans-serif]">
        {["File", "Edit", "Tools", "Window"].map((m) => <button key={m} type="button">{m}</button>)}
      </nav>

      <div className="flex h-[35px] shrink-0 items-center border-t border-b-2 border-[#a8a8a8] bg-[#f0f0f0] pl-[3px]">
        <Grip />
        <button type="button" aria-label="New dashboard" className="ml-1.5 flex size-6 items-center justify-center">
          <svg width="22" height="20" viewBox="0 0 22 20" fill="none"><path d="M1 1h18v4h-18z" fill="#505050" /><path d="M1.500 1v13.500h8M18.500 5v4" stroke="#505050" strokeWidth="2" /><path d="M3 2.500h5" stroke="#f0f0f0" /><circle cx="15.500" cy="14" r="4.500" fill="#f0f0f0" stroke="#505050" strokeWidth="1.500" /><path d="M15.500 11v6M12.500 14h6" stroke="#505050" strokeWidth="2" /></svg>
        </button>
        <button type="button" aria-label="Save all" className="ml-[5px] flex size-6 items-center justify-center">
          <svg width="23" height="22" viewBox="0 0 23 22"><g stroke="#98a0a8"><path d="M0.500 0.500h15v14h-13l-2-2z" fill="#8594a3" /><path d="M3 1h9v6h-9zM4 10h8v4h-8z" fill="#d4dbe1" /><path d="M7.500 7.500h15v14h-13l-2-2z" fill="#8594a3" /><path d="M10 8h9v6h-9zM11 17h8v4h-8z" fill="#d4dbe1" /></g></svg>
        </button>
        <div className="ml-2"><Grip /></div>
        <button type="button" aria-label="Refresh" className="ml-[3px] flex size-5 items-center justify-center">
          <svg width="16" height="16" viewBox="0 0 16 16" fill="none"><path d="M13.500 10a6 6 0 1 1-1.500-6" stroke="#505050" strokeWidth="2" /><path d="M15 0.500v6h-6z" fill="#505050" /></svg>
        </button>
        <div className="ml-[5px]"><Grip /></div>
        <button type="button" aria-label="Previous configuration" className="ml-[3px] flex h-5 w-[21px] items-center justify-center">
          <svg width="14" height="14" viewBox="0 0 14 14" fill="none" stroke="#505050" strokeWidth="1.800"><path d="M14 7h-12M7.500 1l-6 6 6 6" /></svg>
        </button>
        <div className="flex h-[30px] w-[250px] items-center border border-[#adadad] bg-[#e1e1e1] py-0.5 pr-[5px] pl-0.5">
          <select aria-label="Configuration" defaultValue="configuration_1" className="h-full flex-1 appearance-none border border-dotted border-black outline-none">
            <option>configuration_1</option>
          </select>
          <span className="ml-1.5"><ThinChevron /></span>
        </div>
        <button type="button" aria-label="Next configuration" className="flex h-5 w-[22px] items-center justify-center">
          <svg width="14" height="14" viewBox="0 0 14 14" fill="none" stroke="#505050" strokeWidth="1.800"><path d="M0 7h12M6.500 1l6 6-6 6" /></svg>
        </button>
      </div>

      <main className="grid min-h-0 flex-1 grid-cols-[621fr_784fr_439fr] gap-x-1 px-[3px] pt-[7px] pb-1">
        <div className="flex min-h-0 min-w-0 flex-col gap-1">
          <SlidePanel title="Text Block" className="shrink-0">
            <div className="flex h-[113px] min-w-0 flex-1 flex-col border border-[#828790]">
              <div className="flex min-h-0 flex-1">
                <div className="flex-1 px-2 pt-2 font-['Liberation_Serif','Times_New_Roman',serif] text-base leading-[18px]">
                  <p>The forecast used is <b>2020.09.09-1400 GMT</b></p>
                  <p>The watershed is <i>NAB_West_Branch_Susquehanna</i></p>
                </div>
                <div className="flex w-[17px] flex-col items-center bg-[#f0f0f0]">
                  <button type="button" aria-label="Scroll up" className="flex h-[17px] items-center"><Chevron dir="up" /></button>
                  <div className="h-[11px] w-full bg-[#cdcdcd]" />
                  <div className="flex-1" />
                  <button type="button" aria-label="Scroll down" className="flex h-[17px] items-center"><Chevron dir="down" /></button>
                </div>
              </div>
              <div className="flex h-4 items-center bg-[#f0f0f0] pr-[17px]">
                <button type="button" aria-label="Scroll left" className="flex w-[17px] justify-center"><Chevron dir="left" /></button>
                <div className="h-full flex-1"><div className="h-full w-[69%] bg-[#cdcdcd]" /></div>
                <button type="button" aria-label="Scroll right" className="flex w-[17px] justify-center"><Chevron dir="right" /></button>
              </div>
            </div>
          </SlidePanel>

          <SlidePanel title="Plot Panel" className="min-h-0 flex-1">
            <div className="flex min-w-0 flex-1 border border-[#828790] p-[3px]">
              <div className="flex w-[30px] shrink-0 flex-col border-t border-l-2 border-[#828790] pt-0.5 pl-px">
                <PointerTools />
                <button type="button" aria-label="Properties" className="mt-[7px] flex h-[25px] w-[25px] items-center justify-center border border-[#adadad] bg-[#e1e1e1]">
                  <svg width="18" height="18" viewBox="0 0 18 18"><path d="M1.500 4.500h11v12h-11z" fill="#f4f4f4" stroke="#404040" strokeWidth="1.500" /><path d="M3.500 12h2M7 12h4M3.500 14.500h2M7 14.500h4" stroke="#404040" /><path d="M3 8l5-6h9v5h-7l-3 3z" fill="#fff27a" stroke="#b09a20" strokeWidth=".8" /><path d="M3 9l4-4 2 4M4 7l5 3" stroke="#303000" fill="none" /><path d="M17 1.500v6" stroke="#2ec060" strokeWidth="2" /></svg>
                </button>
              </div>
              <div className="flex min-h-0 min-w-0 flex-1 flex-col pl-0.5">
                <div className="min-h-0 flex-1"><Hydrograph /></div>
                <ul className="ml-[5px] flex h-[49px] shrink-0 flex-col border-t-2 border-l-2 border-[#828790] pl-px text-[13px]">
                  <li className="flex h-[22px] items-center gap-[7px]"><span className="h-0.5 w-[33px] bg-[#0000ff]" />LEWISBURG N0S0 FLOW</li>
                  <li className="flex h-[22px] items-center gap-[7px]"><span className="h-0.5 w-[33px] bg-black" />LEWISBURG N0S0 FLOW-OBSERVED</li>
                </ul>
              </div>
            </div>
          </SlidePanel>
        </div>

        <TabPanel title="Map Panel" className="min-h-0 min-w-0">
          <div className="flex min-w-0 flex-1 bg-[#f0f0f0] pr-0.5">
            <div className="flex w-[29px] shrink-0 flex-col pl-px pt-px"><PointerTools /></div>
            <div className="min-h-0 min-w-0 flex-1 py-0.5"><RiverMap /></div>
          </div>
        </TabPanel>

        <div className="flex min-h-0 min-w-0 flex-col gap-1">
          <TabPanel title="Model Actions" className="shrink-0">
            <div className="h-[294px] min-w-0 flex-1 bg-[#f0f0f0] px-[5px] pt-1.5">
              <p className="font-bold">Forecast: 2020.09.09-1400 GMT</p>
              <div className="mt-1 flex">
                <label htmlFor="run" className="w-[87px] shrink-0 pt-px">Forecast Run:</label>
                <div className="flex h-[22px] flex-1 items-center border border-[#adadad] bg-[#e1e1e1] pr-1">
                  <select id="run" defaultValue="steady" className="h-full flex-1 appearance-none pl-[3px] outline-none">
                    <option value="steady">QPF Daily Summer Real Time Steady</option>
                  </select>
                  <ThinChevron />
                </div>
              </div>
              <div className="mt-1.5 ml-[86px] flex w-[207px] flex-col gap-0.5">
                {actions.map(([name, Icon, h], i) => (
                  <button key={i} type="button" className={`flex items-center gap-1 border border-[#adadad] bg-[#e1e1e1] pl-3.5 ${h}`}>
                    <Icon />{name}
                  </button>
                ))}
              </div>
            </div>
          </TabPanel>

          <TabPanel title="Tabulate Panel" active className="min-h-0 flex-1">
            <div className="flex min-h-0 min-w-0 flex-1 overflow-hidden border border-[#828790]">
              <div className="min-w-0 flex-1 overflow-hidden">
                <table className="w-full table-fixed border-separate border-spacing-0">
                  <colgroup><col className="w-[59px]" /><col className="w-[112px]" /><col className="w-[98px]" /><col /></colgroup>
                  <thead>
                    <tr>
                      {heads.map((lines, i) => (
                        <th key={i} scope="col" className="h-[60px] border-r-2 border-b-2 border-[#828282] bg-[#f0f0f0] p-0 leading-[18px] font-normal whitespace-nowrap">
                          {lines.map((l) => <div key={l}>{l}</div>)}
                        </th>
                      ))}
                    </tr>
                  </thead>
                  <tbody>
                    {rows.map((r) => (
                      <tr key={r[0]}>
                        {r.map((c, i) => <td key={i} className="border-r border-b border-[#828282] p-0 pr-0.5 text-right leading-[15px] whitespace-nowrap">{c}</td>)}
                      </tr>
                    ))}
                  </tbody>
                </table>
              </div>
              <div className="flex w-[18px] flex-col items-center bg-[#f0f0f0] pt-[60px]">
                <button type="button" aria-label="Scroll table up" className="flex h-[17px] items-center"><Chevron dir="up" /></button>
                <div className="h-[25px] w-[15px] bg-[#cdcdcd]" />
                <div className="flex-1" />
                <button type="button" aria-label="Scroll table down" className="flex h-[17px] items-center"><Chevron dir="down" /></button>
              </div>
            </div>
          </TabPanel>
        </div>
      </main>
    </div>
  );
}
